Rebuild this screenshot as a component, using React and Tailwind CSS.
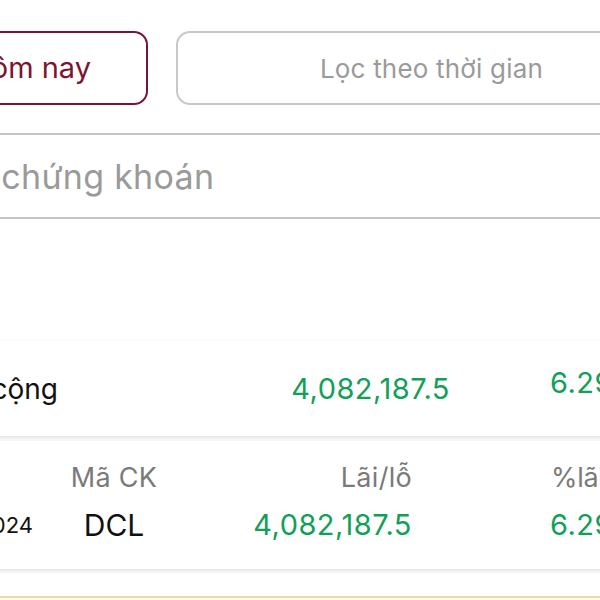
export default function App() {
  return (
    <div className="w-[600px] h-[600px] overflow-hidden bg-white relative" style={{ fontFamily: "Inter, 'Noto Sans', sans-serif" }}>
      <div className="ml-[-100px] w-[800px] flex flex-col">
        {/* filter buttons */}
        <div className="mt-[31px] flex gap-[28px]">
          <div className="w-[248px] h-[74px] shrink-0 border-2 border-[#7b1430] rounded-[14px] flex items-center justify-end pr-[55px] text-[29px] text-[#7b1430]">
            Hôm nay
          </div>
          <div className="w-[511px] h-[74px] shrink-0 border-2 border-[#c8c8c8] rounded-[14px] flex items-center justify-center text-[26px] tracking-[0.2px] text-[#9a9a9a]">
            Lọc theo thời gian
          </div>
        </div>

        {/* search field */}
        <div className="mt-[28px] h-[86px] border-y-2 border-[#c4c4c4] flex items-center pl-[41px] text-[34px] tracking-[0.3px] text-[#9a9a9a]">
          Mã chứng khoán
        </div>

        {/* blank area with partial icon */}
        <div className="h-[122px] flex justify-end pt-[26px]">
          <div className="mr-[-14px] w-[18px] h-[18px] rounded-full border border-[#e6e6e6] flex items-center justify-center">
            <div className="w-[4px] h-[8px] bg-[#3b6fa8] rounded-sm"></div>
          </div>
        </div>

        {/* total card */}
        <div className="h-[95px] bg-white rounded-[12px] shadow-[0_2px_4px_rgba(0,0,0,0.13)] flex items-center">
          <div className="w-[158px] text-right text-[28px] text-[#111]">Tổng cộng</div>
          <div className="w-[392px] text-right text-[29px] tracking-[0.5px] text-[#12a058]">4,082,187.5</div>
          <div className="ml-[100px] text-[29px] tracking-[0.5px] text-[#12a058] mt-[-12px]">6.29%</div>
        </div>

        {/* detail card */}
        <div className="mt-[5px] h-[128px] bg-white rounded-[12px] shadow-[0_2px_4px_rgba(0,0,0,0.13)] flex flex-col pt-[19px]">
          <div className="flex items-center h-[36px] text-[27px] tracking-[0.3px] text-[#7a7a7a]">
            <div className="w-[133px]"></div>
            <div className="w-[162px] text-center">Mã CK</div>
            <div className="w-[217px] text-right">Lãi/lỗ</div>
            <div className="ml-[139px] tracking-[-0.3px]">%lãi/lỗ</div>
          </div>
          <div className="flex items-center h-[40px] mt-[9px]">
            <div className="w-[133px] text-right text-[22px] text-[#111]">12/2024</div>
            <div className="w-[162px] text-center text-[30px] text-[#111]">DCL</div>
            <div className="w-[217px] text-right text-[29px] tracking-[0.5px] text-[#12a058]">4,082,187.5</div>
            <div className="ml-[138px] text-[29px] tracking-[0.5px] text-[#12a058]">6.29%</div>
          </div>
        </div>

        {/* next element (yellow) */}
        <div className="mt-[27px] h-[40px] bg-[#fffbe8] border-t-2 border-[#e9dca6]"></div>
      </div>
    </div>
  );
}
